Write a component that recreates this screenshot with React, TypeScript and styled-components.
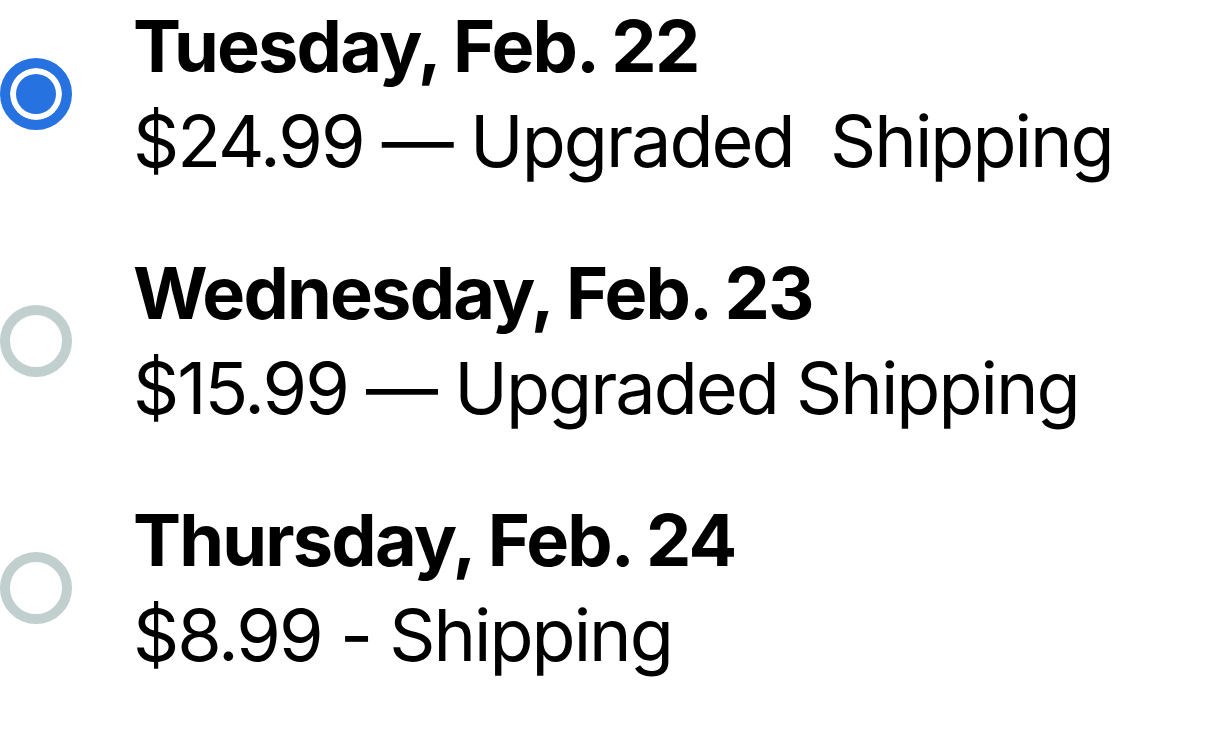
import React from "react";
import styled, { createGlobalStyle } from "styled-components";

const Global = createGlobalStyle`
  html, body { margin: 0; padding: 0; background: #ffffff; }
  body { font-family: Inter, "Liberation Sans", sans-serif; color: #000; }
`;

const List = styled.div`
  display: flex;
  flex-direction: column;
  gap: 57px;
  margin-top: -2px;
`;

const Row = styled.label`
  display: flex;
  align-items: flex-start;
  gap: 61px;
`;

const Radio = styled.span<{ $checked?: boolean }>`
  flex: none;
  box-sizing: border-box;
  width: 72px;
  height: 72px;
  margin-top: 60px;
  border-radius: 50%;
  border: 10px solid ${(p) => (p.$checked ? "#2672e0" : "#c2cfcf")};
  background: ${(p) => (p.$checked ? "#2672e0" : "#ffffff")};
  box-shadow: ${(p) => (p.$checked ? "inset 0 0 0 6px #ffffff" : "none")};
`;

const Texts = styled.div`
  display: flex;
  flex-direction: column;
`;

const Title = styled.div`
  font-size: 72px;
  line-height: 95px;
  font-weight: 700;
  letter-spacing: -1.8px;
  white-space: pre;
`;

const Sub = styled.div`
  font-size: 72px;
  line-height: 95px;
  font-weight: 400;
  letter-spacing: -2px;
  white-space: pre;
`;

const options = [
  { title: "Tuesday, Feb. 22", sub: "$24.99 — Upgraded  Shipping", checked: true },
  { title: "Wednesday, Feb. 23", sub: "$15.99 — Upgraded Shipping", checked: false },
  { title: "Thursday, Feb. 24", sub: "$8.99 - Shipping", checked: false },
];

export default function App() {
  return (
    <>
      <Global />
      <List>
        {options.map((o) => (
          <Row key={o.title}>
            <Radio $checked={o.checked} />
            <Texts>
              <Title>{o.title}</Title>
              <Sub>{o.sub}</Sub>
            </Texts>
          </Row>
        ))}
      </List>
    </>
  );
}
